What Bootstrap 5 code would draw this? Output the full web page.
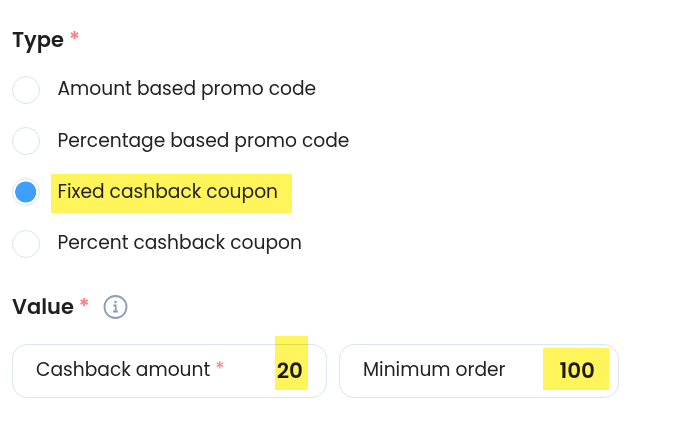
<!DOCTYPE html>
<html lang="en">
<head>
<meta charset="utf-8">
<meta name="viewport" content="width=device-width, initial-scale=1">
<title>Promo code</title>
<link href="https://cdn.jsdelivr.net/npm/bootstrap@5.3.0/dist/css/bootstrap.min.css" rel="stylesheet">
<style>
body{font-family:Poppins,Inter,sans-serif;font-size:18.67px;line-height:28px;color:#222;background:#fff;overflow:hidden}
.promo-form{padding:25px 0 0 12px}
.group-title{font-size:21px;font-weight:600;line-height:30px;height:30px;margin:0;color:#1f1f1f;white-space:nowrap}
.req{color:#ff7b7b}
.options{margin-top:10.6px}
.option{height:51.3px;display:flex;align-items:center;white-space:nowrap}
.option .form-check-input{width:28px;height:28px;margin:0 0 3px;border:1px solid #d9e5f1;box-shadow:none;flex:none}
.option .form-check-input:checked{background:radial-gradient(circle at 12.7px 13px,#409eff 10.2px,#fff 10.8px)}
.option label{margin-left:11px;padding:3.6px 14px 7.4px 6.5px;height:39px;line-height:28px}
.marked{background:#fff45a;width:241px}
.value-head{margin-top:21px}
.value-head svg{margin-left:13px}
.fields{margin-top:22px;gap:12px}
.field{height:54px;border:1px solid #d9e5f1;border-radius:15px;padding:0 23px;white-space:nowrap;line-height:50px}
.field-amount{width:315px}
.field-order{width:280px}
.amount{font-size:21.5px;font-weight:600;color:#1b1b1b;line-height:51px}
.highlight{position:absolute;background:#fff45a;mix-blend-mode:multiply}
</style>
</head>
<body>
<form class="promo-form">
  <h2 class="group-title"><span>Type</span> <span class="req">*</span></h2>
  <div class="options">
    <div class="option"><input class="form-check-input" type="radio" name="type" id="t1"><label for="t1">Amount based promo code</label></div>
    <div class="option"><input class="form-check-input" type="radio" name="type" id="t2"><label for="t2">Percentage based promo code</label></div>
    <div class="option"><input class="form-check-input" type="radio" name="type" id="t3" checked><label class="marked" for="t3">Fixed cashback coupon</label></div>
    <div class="option"><input class="form-check-input" type="radio" name="type" id="t4"><label for="t4">Percent cashback coupon</label></div>
  </div>
  <div class="value-head d-flex align-items-center">
    <h2 class="group-title"><span>Value</span> <span class="req">*</span></h2>
    <svg width="25" height="24" viewBox="-.5 0 25 24" fill="none" stroke="#8b9dbb" stroke-width="1.8"><circle cx="12" cy="12" r="11"/><path d="M9.8 10.5h2.4v6M9.5 16.5h5"/><circle cx="12" cy="7" r="1.3" fill="#8b9dbb" stroke="none"/></svg>
  </div>
  <div class="fields d-flex">
    <div class="field field-amount position-relative d-flex justify-content-between">
      <span>Cashback amount <span class="req">*</span></span><span class="amount">20</span>
      <span class="highlight" style="left:262px;top:-9px;width:33px;height:54px"></span>
    </div>
    <div class="field field-order position-relative d-flex justify-content-between">
      <span>Minimum order</span><span class="amount">100</span>
      <span class="highlight" style="left:203px;top:3px;width:66px;height:42px"></span>
    </div>
  </div>
</form>
<script src="https://cdn.jsdelivr.net/npm/bootstrap@5.3.0/dist/js/bootstrap.bundle.min.js"></script>
</body>
</html>
